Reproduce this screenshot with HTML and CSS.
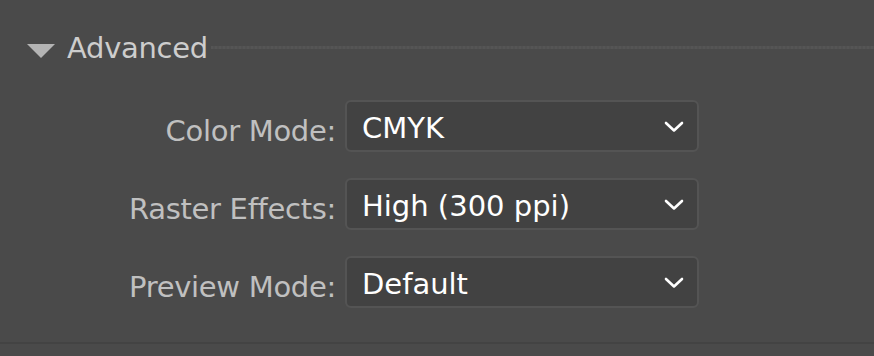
FILE: index.html
```html
<!DOCTYPE html>
<html>
<head>
<meta charset="utf-8">
<link rel="stylesheet" href="styles.css">
</head>
<body>
<div class="panel">
  <div class="section-head">
    <svg class="disclosure" width="28" height="14" viewBox="0 0 28 14"><polygon points="0,0 28,0 14,14" fill="#b4b4b4"/></svg>
    <span class="section-title">Advanced</span>
    <div class="rule"></div>
  </div>
  <div class="fields">
    <label class="field-label">Color Mode:</label>
    <div class="select"><span class="select-value">CMYK</span><svg class="chevron" width="20" height="12" viewBox="0 0 20 12"><polyline points="2,2 10,9.5 18,2" fill="none" stroke="#fff" stroke-width="2.6" stroke-linecap="round" stroke-linejoin="round"/></svg></div>
    <label class="field-label">Raster Effects:</label>
    <div class="select"><span class="select-value">High (300 ppi)</span><svg class="chevron" width="20" height="12" viewBox="0 0 20 12"><polyline points="2,2 10,9.5 18,2" fill="none" stroke="#fff" stroke-width="2.6" stroke-linecap="round" stroke-linejoin="round"/></svg></div>
    <label class="field-label">Preview Mode:</label>
    <div class="select"><span class="select-value">Default</span><svg class="chevron" width="20" height="12" viewBox="0 0 20 12"><polyline points="2,2 10,9.5 18,2" fill="none" stroke="#fff" stroke-width="2.6" stroke-linecap="round" stroke-linejoin="round"/></svg></div>
  </div>
  <div class="bottom-rule"></div>
</div>
</body>
</html>
```

FILE: styles.css
```css
html, body {
  margin: 0;
  padding: 0;
}
body {
  background: #4a4a4a;
  width: 874px;
  height: 356px;
  overflow: hidden;
  font-family: "DejaVu Sans", "Open Sans", sans-serif;
}
.panel {
  display: flex;
  flex-direction: column;
}
.section-head {
  display: flex;
  align-items: flex-start;
  padding: 28px 0 0 27px;
  height: 40px;
}
.disclosure {
  margin-top: 16px;
  margin-right: 12px;
  flex: none;
}
.section-title {
  font-size: 29px;
  letter-spacing: -0.3px;
  line-height: 40px;
  color: #cdcdcd;
}
.rule {
  flex: 1;
  margin-left: 3px;
  margin-top: 18px;
  height: 3px;
  background: repeating-linear-gradient(90deg, #555 0 2px, #515151 2px 4px);
}
.fields {
  display: grid;
  grid-template-columns: 336px 354px;
  column-gap: 9px;
  row-gap: 26px;
  margin-top: 32px;
  grid-auto-rows: 52px;
}
.field-label {
  box-sizing: border-box;
  text-align: right;
  font-size: 29px;
  letter-spacing: -0.3px;
  padding-top: 11px;
  line-height: 41px;
  color: #c0c0c0;
  white-space: nowrap;
}
.select {
  box-sizing: border-box;
  display: flex;
  align-items: center;
  justify-content: space-between;
  background: #424242;
  border: 2px solid #545454;
  border-radius: 6px;
  padding: 0 13px 0 15px;
}
.select-value {
  font-size: 29px;
  color: #ffffff;
  line-height: 48px;
  margin-top: 3px;
  white-space: nowrap;
}
.chevron {
  flex: none;
  margin-top: 2px;
}
.bottom-rule {
  margin-top: 34px;
  height: 2px;
  background: #434343;
}
```
